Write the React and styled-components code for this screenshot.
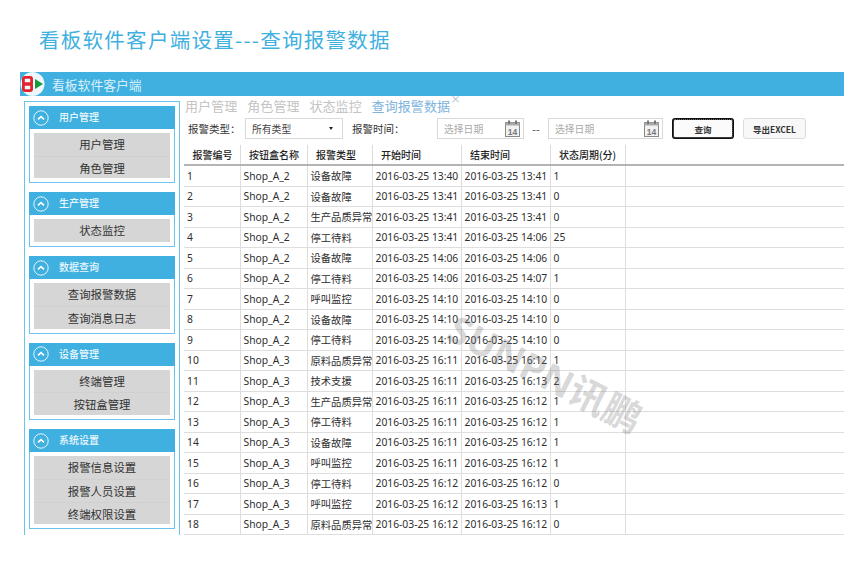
import React from 'react';
import styled, { createGlobalStyle } from 'styled-components';

const GlobalStyle = createGlobalStyle`
  html, body {
    margin: 0;
    background: #fff;
    font-family: "Noto Sans", "Noto Sans CJK SC", sans-serif;
  }
`;

const Page = styled.div`
  position: relative;
  width: 860px;
  height: 570px;
  overflow: hidden;
  padding: 25px 16px 0 20px;
  box-sizing: border-box;
`;

const Heading = styled.h1`
  margin: 0 0 18px 19px;
  height: 29px;
  font-size: 20.5px;
  line-height: 29px;
  font-weight: 400;
  letter-spacing: 1.28px;
  color: #3fb0e0;
  font-family: "Noto Sans CJK SC", sans-serif;
`;

const Window = styled.div`
  width: 824px;
  height: 463px;
  display: flex;
  flex-direction: column;
`;

const TitleBar = styled.div`
  height: 24px;
  flex: none;
  display: flex;
  align-items: center;
  gap: 7px;
  background: #3fb0e0;
  color: #d9f0fa;
  font-size: 12.8px;
  font-family: "Noto Sans CJK SC", sans-serif;
`;

const Main = styled.div`
  flex: 1;
  display: flex;
  min-height: 0;
`;

const Sidebar = styled.nav`
  width: 156px;
  margin: 5px 0 0 4px;
  flex: none;
  box-sizing: border-box;
  padding: 4px 4px 0;
  border: 1px solid #6cc4ec;
  border-bottom: 0;
  display: flex;
  flex-direction: column;
  gap: 9.3px;
`;

const Group = styled.section`
  border: 1px solid #6cc4ec;
  border-top: 0;
`;

const GroupHead = styled.div`
  height: 23px;
  margin: 0 -1px;
  display: flex;
  align-items: center;
  gap: 10px;
  padding-left: 4px;
  background: #3fb0e0;
  color: #eaf7fd;
  font-size: 10px;
  font-weight: 500;
  font-family: "Noto Sans CJK SC", sans-serif;
`;

const GroupTitle = styled.span`
  padding-bottom: 2px;
`;

const GroupBody = styled.div`
  margin: 4px;
  background: #d6d6d6;
`;

const GroupItem = styled.div`
  height: 22.6px;
  line-height: 22px;
  text-align: center;
  font-size: 11.4px;
  color: #333;
  font-family: "Noto Sans CJK SC", sans-serif;
  & + & {
    border-top: 1px solid #d0d0d0;
    height: 21.6px;
  }
`;

const Content = styled.div`
  flex: 1;
  min-width: 0;
  padding: 1px 0 0 4px;
  display: flex;
  flex-direction: column;
`;

const Tabs = styled.div`
  height: 19px;
  display: flex;
  gap: 9.7px;
  padding-left: 1px;
`;

const Tab = styled.div`
  position: relative;
  font-size: 13px;
  line-height: 17px;
  width: ${p => (p.$active ? '78px' : '52.5px')};
  letter-spacing: 0.1px;
  white-space: nowrap;
  color: ${p => (p.$active ? '#7db4dc' : '#c4c4c4')};
  font-family: "Noto Sans CJK SC", sans-serif;
`;

const TabClose = styled.span`
  position: absolute;
  left: 79px;
  top: -4px;
  font-size: 10px;
  line-height: 12px;
  font-weight: 500;
  color: #a3bfd6;
`;

const Toolbar = styled.div`
  height: 21px;
  margin-top: 2px;
  padding-left: 4px;
  display: flex;
  align-items: center;
  font-size: 10.5px;
  color: #333;
  font-family: "Noto Sans CJK SC", sans-serif;
`;

const Label = styled.span`
  width: ${p => p.$w}px;
  padding-left: ${p => p.$pad || 0}px;
  box-sizing: border-box;
  flex: none;
  white-space: nowrap;
`;

const Field = styled.div`
  width: ${p => p.$w}px;
  height: 21px;
  flex: none;
  box-sizing: border-box;
  border: 1px solid #d9d9d9;
  display: flex;
  align-items: center;
  justify-content: space-between;
  padding: 0 3px 0 6px;
  color: ${p => (p.$muted ? '#aaa' : '#444')};
  font-size: 9.8px;
`;

const Caret = styled.i`
  width: 0;
  height: 0;
  margin-right: 6px;
  border: 2.5px solid transparent;
  border-top: 3.5px solid #222;
  border-bottom: 0;
`;

const Dash = styled.span`
  width: 24px;
  flex: none;
  text-align: center;
  color: #444;
`;

const QueryButton = styled.div`
  width: 62px;
  height: 21px;
  flex: none;
  margin-left: 9px;
  box-sizing: border-box;
  border: 2px solid #111;
  border-radius: 3px;
  background: #fbfbfb;
  outline: 1px dotted #666;
  outline-offset: -2px;
  display: flex;
  align-items: center;
  justify-content: center;
  font-size: 8.5px;
  font-weight: 700;
  color: #333;
`;

const ExportButton = styled.div`
  width: 63px;
  height: 21px;
  flex: none;
  margin-left: 9px;
  box-sizing: border-box;
  border: 1px solid #dcdcdc;
  border-radius: 3px;
  background: #f8f8f8;
  display: flex;
  align-items: center;
  justify-content: center;
  font-size: 8.5px;
  font-weight: 700;
  color: #333;
`;

const Table = styled.table`
  width: 660px;
  margin-top: 6px;
  border-collapse: collapse;
  table-layout: fixed;
  font-size: 10.3px;
  color: #2e2e2e;
  font-family: "Noto Sans", "Noto Sans CJK SC", sans-serif;
`;

const Head = styled.th`
  height: 19px;
  padding: 0 0 0 8.5px;
  font-size: 10px;
  font-weight: 500;
  color: #222;
  text-align: left;
  white-space: nowrap;
  border-right: 1px solid #dcdcdc;
  border-bottom: 2px solid #b4b4b4;
  font-family: "Noto Sans CJK SC", sans-serif;
  &:last-child {
    border-right: 0;
  }
`;

const Cell = styled.td`
  height: 19.5px;
  padding: 0 0 0 3px;
  white-space: nowrap;
  overflow: hidden;
  border-right: 1px solid #dedede;
  border-bottom: 1px solid #dedede;
  &:last-child {
    border-right: 0;
  }
`;

const Watermark = styled.div`
  position: absolute;
  left: 440px;
  top: 351px;
  transform: rotate(27deg);
  font-size: 38px;
  line-height: 44px;
  font-weight: 700;
  white-space: nowrap;
  color: rgba(120, 120, 120, 0.3);
  font-family: "Noto Sans", "Noto Sans CJK SC", sans-serif;
  pointer-events: none;
`;

const Logo = () => (
  <svg width="25" height="24" viewBox="0 0 25 24">
    <circle cx="12.5" cy="12" r="12" fill="#eef7fb" />
    <rect x="3.4" y="5.4" width="8.2" height="6.6" rx="1.5" fill="none" stroke="#e0242b" strokeWidth="2.8" />
    <rect x="3.4" y="12" width="8.2" height="6.6" rx="1.5" fill="none" stroke="#e0242b" strokeWidth="2.8" />
    <path d="M15 7 L23 12 L15 17 Z" fill="#159a3c" />
  </svg>
);

const Chevron = () => (
  <svg width="16" height="16" viewBox="0 0 16 16">
    <circle cx="8" cy="8" r="7.2" fill="none" stroke="#e6f5fc" strokeWidth="1" />
    <path d="M5 9.4 L8 6.6 L11 9.4" fill="none" stroke="#fff" strokeWidth="1.7" />
  </svg>
);

const CalendarIcon = () => (
  <svg width="15" height="17" viewBox="0 0 15 17">
    <rect x="0.5" y="2.5" width="14" height="14" fill="#f2f2f2" stroke="#888" />
    <rect x="0.5" y="2.5" width="14" height="3" fill="#aaa" />
    <rect x="3" y="0.5" width="2" height="3.5" fill="#777" />
    <rect x="10" y="0.5" width="2" height="3.5" fill="#777" />
    <text x="7.5" y="14.5" fontSize="8.5" fontWeight="700" textAnchor="middle" fill="#777" fontFamily="Liberation Sans">14</text>
  </svg>
);

const menu = [
  { title: '用户管理', items: ['用户管理', '角色管理'] },
  { title: '生产管理', items: ['状态监控'] },
  { title: '数据查询', items: ['查询报警数据', '查询消息日志'] },
  { title: '设备管理', items: ['终端管理', '按钮盒管理'] },
  { title: '系统设置', items: ['报警信息设置', '报警人员设置', '终端权限设置'] },
];

const columns = [
  { title: '报警编号', width: 56 },
  { title: '按钮盒名称', width: 67 },
  { title: '报警类型', width: 65 },
  { title: '开始时间', width: 89 },
  { title: '结束时间', width: 89 },
  { title: '状态周期(分)', width: 75 },
  { title: '', width: 219 },
];

const rows = [
  [1, 'Shop_A_2', '设备故障', '2016-03-25 13:40', '2016-03-25 13:41', 1],
  [2, 'Shop_A_2', '设备故障', '2016-03-25 13:41', '2016-03-25 13:41', 0],
  [3, 'Shop_A_2', '生产品质异常', '2016-03-25 13:41', '2016-03-25 13:41', 0],
  [4, 'Shop_A_2', '停工待料', '2016-03-25 13:41', '2016-03-25 14:06', 25],
  [5, 'Shop_A_2', '设备故障', '2016-03-25 14:06', '2016-03-25 14:06', 0],
  [6, 'Shop_A_2', '停工待料', '2016-03-25 14:06', '2016-03-25 14:07', 1],
  [7, 'Shop_A_2', '呼叫监控', '2016-03-25 14:10', '2016-03-25 14:10', 0],
  [8, 'Shop_A_2', '设备故障', '2016-03-25 14:10', '2016-03-25 14:10', 0],
  [9, 'Shop_A_2', '停工待料', '2016-03-25 14:10', '2016-03-25 14:10', 0],
  [10, 'Shop_A_3', '原料品质异常', '2016-03-25 16:11', '2016-03-25 16:12', 1],
  [11, 'Shop_A_3', '技术支援', '2016-03-25 16:11', '2016-03-25 16:13', 2],
  [12, 'Shop_A_3', '生产品质异常', '2016-03-25 16:11', '2016-03-25 16:12', 1],
  [13, 'Shop_A_3', '停工待料', '2016-03-25 16:11', '2016-03-25 16:12', 1],
  [14, 'Shop_A_3', '设备故障', '2016-03-25 16:11', '2016-03-25 16:12', 1],
  [15, 'Shop_A_3', '呼叫监控', '2016-03-25 16:11', '2016-03-25 16:12', 1],
  [16, 'Shop_A_3', '停工待料', '2016-03-25 16:12', '2016-03-25 16:12', 0],
  [17, 'Shop_A_3', '呼叫监控', '2016-03-25 16:12', '2016-03-25 16:13', 1],
  [18, 'Shop_A_3', '原料品质异常', '2016-03-25 16:12', '2016-03-25 16:12', 0],
];

export default function App() {
  return (
    <Page>
      <GlobalStyle />
      <Heading>看板软件客户端设置---查询报警数据</Heading>
      <Window>
        <TitleBar>
          <Logo />
          看板软件客户端
        </TitleBar>
        <Main>
          <Sidebar>
            {menu.map(group => (
              <Group key={group.title}>
                <GroupHead>
                  <Chevron />
                  <GroupTitle>{group.title}</GroupTitle>
                </GroupHead>
                <GroupBody>
                  {group.items.map(item => (
                    <GroupItem key={item}>{item}</GroupItem>
                  ))}
                </GroupBody>
              </Group>
            ))}
          </Sidebar>
          <Content>
            <Tabs>
              <Tab>用户管理</Tab>
              <Tab>角色管理</Tab>
              <Tab>状态监控</Tab>
              <Tab $active>
                查询报警数据
                <TabClose>×</TabClose>
              </Tab>
            </Tabs>
            <Toolbar>
              <Label $w={57}>报警类型：</Label>
              <Field $w={98}>
                所有类型
                <Caret />
              </Field>
              <Label $w={94} $pad={9}>报警时间：</Label>
              <Field $w={87} $muted>
                选择日期
                <CalendarIcon />
              </Field>
              <Dash>--</Dash>
              <Field $w={115} $muted>
                选择日期
                <CalendarIcon />
              </Field>
              <QueryButton>查询</QueryButton>
              <ExportButton>导出EXCEL</ExportButton>
            </Toolbar>
            <Table>
              <colgroup>
                {columns.map((col, i) => (
                  <col key={i} width={col.width} />
                ))}
              </colgroup>
              <thead>
                <tr>
                  {columns.map((col, i) => (
                    <Head key={i}>{col.title}</Head>
                  ))}
                </tr>
              </thead>
              <tbody>
                {rows.map(row => (
                  <tr key={row[0]}>
                    {row.map((value, i) => (
                      <Cell key={i}>{value}</Cell>
                    ))}
                    <Cell />
                  </tr>
                ))}
              </tbody>
            </Table>
          </Content>
        </Main>
      </Window>
      <Watermark>SUNPN讯鹏</Watermark>
    </Page>
  );
}
